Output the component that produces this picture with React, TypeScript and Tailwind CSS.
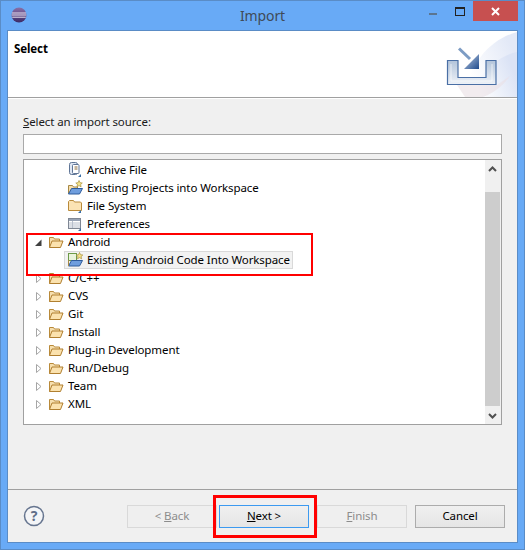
import React from 'react';

const FONT = 'font-["Noto_Sans","Open_Sans",sans-serif]';

const EclipseLogo = () => (
  <svg width="16" height="16" viewBox="0 0 16 16">
    <defs>
      <linearGradient id="ecl" x1="0" y1="0" x2="0" y2="1">
        <stop offset="0" stopColor="#8a70a8" />
        <stop offset="1" stopColor="#3b2a66" />
      </linearGradient>
    </defs>
    <circle cx="8" cy="8" r="7.5" fill="url(#ecl)" />
    <path d="M1 6h14M0.7 8h14.6M1.2 10.200h13.600" stroke="#e8e2f0" strokeWidth="1" />
  </svg>
);

const FolderOpen = () => (
  <svg width="16" height="14" viewBox="0 0 16 14">
    <path d="M1.500 12.500V2.500h4l1 1.500h5v2" fill="#f6dfae" stroke="#b98a3a" />
    <path d="M1.500 12.500L4 6h11l-2.500 6.500z" fill="#fbe2ae" stroke="#b07f30" />
  </svg>
);

const Twisty = ({ open }: { open?: boolean }) =>
  open ? (
    <svg width="9" height="9" viewBox="0 0 9 9">
      <path d="M1 8L7.500 1.500V8z" fill="#404040" />
    </svg>
  ) : (
    <svg width="9" height="11" viewBox="0 0 9 11">
      <path d="M2.500 1.500L7 5.500L2.500 9.500z" fill="#fff" stroke="#a6a6a6" />
    </svg>
  );

const WizardBadge = () => <path d="M11 15l3-3v3z" fill="#3a6ea5" />;

const ArchiveIcon = () => (
  <svg width="16" height="16" viewBox="0 0 16 16">
    <rect x="2.500" y="0.500" width="8" height="12" rx="2" fill="#dfe6f2" stroke="#5f7596" />
    <rect x="5.500" y="2.500" width="6.500" height="9" rx="1" fill="#fff" stroke="#5f7596" />
    <path d="M7.500 5h3M7.500 7h3" stroke="#8a6a3a" />
    <WizardBadge />
  </svg>
);

const ProjectsIcon = () => (
  <svg width="17" height="16" viewBox="0 0 17 16">
    <path d="M1.500 13.500V5.500h4l1 1.500h4v6.500z" fill="#f6dfae" stroke="#a78845" />
    <path d="M1.500 14L4.500 8.500h11L12.500 14z" fill="#6f9ede" stroke="#2f5c9c" />
    <path d="M12 0.500l1 2.200 2.300 0.300-1.700 1.500 0.500 2.300-2.100-1.200-2 1.200 0.500-2.300-1.700-1.500 2.300-0.300z" fill="#f4e38a" stroke="#a98f3a" strokeWidth="0.700" />
  </svg>
);

const FileSystemIcon = () => (
  <svg width="16" height="16" viewBox="0 0 16 16">
    <path d="M1.500 12.500V3.500L2.500 2.500h4l1 1.500h6l1 1v7.500z" fill="#fbe3b4" stroke="#b98a3a" />
    <WizardBadge />
  </svg>
);

const PreferencesIcon = () => (
  <svg width="16" height="16" viewBox="0 0 16 16">
    <rect x="1.500" y="2.500" width="12" height="10" fill="#fff" stroke="#7f8794" />
    <rect x="2" y="3" width="11" height="2" fill="#98a3b5" />
    <path d="M2 7h11M2 9h11M2 11h11M5.500 5v7" stroke="#b7bfcc" />
    <WizardBadge />
  </svg>
);

const AndroidCodeIcon = () => (
  <svg width="17" height="16" viewBox="0 0 17 16">
    <rect x="1.500" y="1.500" width="8" height="7" fill="#e9f3dc" stroke="#6c9a48" />
    <path d="M1.500 14L4.500 8.500h11L12.500 14z" fill="#6f9ede" stroke="#2f5c9c" />
    <path d="M1.500 14V8" stroke="#a78845" />
    <path d="M12.500 0.500l1 2.200 2.300 0.300-1.700 1.500 0.500 2.300-2.100-1.200-2 1.200 0.500-2.300-1.700-1.500 2.300-0.300z" fill="#f4e38a" stroke="#a98f3a" strokeWidth="0.700" />
  </svg>
);

const ImportBanner = () => (
  <svg width="72" height="66" viewBox="0 0 72 66">
    <defs>
      <linearGradient id="bannerBg" x1="0" y1="1" x2="1" y2="0.400">
        <stop offset="0.250" stopColor="#ffffff" />
        <stop offset="1" stopColor="#e3e9f7" />
      </linearGradient>
      <linearGradient id="bannerLow" x1="0" y1="1" x2="1" y2="0.600">
        <stop offset="0.200" stopColor="#ffffff" />
        <stop offset="1" stopColor="#dbe3f5" />
      </linearGradient>
      <linearGradient id="tray" x1="0" y1="0" x2="0" y2="1">
        <stop offset="0" stopColor="#b3c4da" />
        <stop offset="1" stopColor="#eef2f8" />
      </linearGradient>
      <linearGradient id="head" x1="0" y1="0" x2="1" y2="1">
        <stop offset="0" stopColor="#c3d3e8" />
        <stop offset="1" stopColor="#1f4a8c" />
      </linearGradient>
    </defs>
    <path d="M72 1C46 8 26 30 18 66H72z" fill="url(#bannerBg)" />
    <path d="M72 21C54 24 34 42 24 66H72z" fill="url(#bannerLow)" />
    <path d="M12 54h40l13-9C60 52 50 62 38 66H20z" fill="#eadfe4" opacity="0.600" />
    <path d="M2.500 29.500h10.500v17h28v-17h10v24h-48.500z" fill="url(#tray)" stroke="#4a6fa5" strokeWidth="1.200" />
    <path d="M6 33v17h41V33" fill="none" stroke="#ffffff" strokeWidth="1" opacity="0.600" />
    <path d="M14 17.500L25 28" stroke="#7d9cc4" strokeWidth="3" />
    <path d="M34 23v15H19z" fill="url(#head)" />
  </svg>
);

const TitleBar = () => (
  <div className="relative flex h-[29px] items-center justify-center">
    <div className="absolute left-[10px] top-[6px]">
      <EclipseLogo />
    </div>
    <span className="text-[14px] text-[#3f4a58]">Import</span>
    <div className="absolute right-[6px] top-0 flex items-start">
      <div className="mt-[12px] mr-[18px] h-[2px] w-[8px] bg-[#5b7590]" />
      <div className="mt-[6px] mr-[8px] h-[9px] w-[10px] border border-t-[2px] border-[#222]" />
      <div className="flex h-[20px] w-[45px] items-center justify-center bg-[#c75050]">
        <svg width="9" height="9" viewBox="0 0 9 9">
          <path d="M1 1l7 7M8 1L1 8" stroke="#fff" strokeWidth="2" />
        </svg>
      </div>
    </div>
  </div>
);

type Row = { label: string; icon: React.ReactNode };

const importers: Row[] = [
  { label: 'Archive File', icon: <ArchiveIcon /> },
  { label: 'Existing Projects into Workspace', icon: <ProjectsIcon /> },
  { label: 'File System', icon: <FileSystemIcon /> },
  { label: 'Preferences', icon: <PreferencesIcon /> },
];

const categories = ['C/C++', 'CVS', 'Git', 'Install', 'Plug-in Development', 'Run/Debug', 'Team', 'XML'];

const ChildRow = ({ row }: { row: Row }) => (
  <div className="flex h-[18px] items-center pl-[43px]">
    <span className="flex w-[20px] shrink-0 items-center">{row.icon}</span>
    <span>{row.label}</span>
  </div>
);

const FolderRow = ({ label, open }: { label: string; open?: boolean }) => (
  <div className="flex h-[18px] items-center pl-[10px]">
    <span className="flex w-[14px] shrink-0 items-center">
      <Twisty open={open} />
    </span>
    <span className="flex w-[20px] shrink-0 items-center">
      <FolderOpen />
    </span>
    <span>{label}</span>
  </div>
);

const Tree = () => (
  <div className="relative flex h-[266px] border border-[#a0a0a0] text-black">
    <div className="min-w-0 flex-1 bg-white pt-[1px]">
      {importers.map((row) => (
        <ChildRow key={row.label} row={row} />
      ))}
      <FolderRow label="Android" open />
      <div className="flex h-[18px] items-center pl-[40px]">
        <div className="flex h-[18px] items-center border border-[#d9d9d9] bg-[#f2f2f2] px-[2px]">
          <span className="flex w-[20px] shrink-0 items-center">
            <AndroidCodeIcon />
          </span>
          <span>Existing Android Code Into Workspace</span>
        </div>
      </div>
      {categories.map((label) => (
        <FolderRow key={label} label={label} />
      ))}
    </div>
    <div className="flex w-[17px] flex-col border-l border-white bg-[#f0f0f0] pr-[1px]">
      <div className="flex h-[17px] items-center justify-center">
        <svg width="9" height="6" viewBox="0 0 9 6">
          <path d="M1 5l3.500-3.500L8 5" fill="none" stroke="#505050" strokeWidth="2" />
        </svg>
      </div>
      <div className="mt-[15px] h-[214px] bg-[#cdcdcd]" />
      <div className="mt-auto flex h-[17px] items-center justify-center">
        <svg width="9" height="6" viewBox="0 0 9 6">
          <path d="M1 1l3.500 3.500L8 1" fill="none" stroke="#505050" strokeWidth="2" />
        </svg>
      </div>
    </div>
  </div>
);

const WizardButton = ({ children, disabled, focused }: { children: React.ReactNode; disabled?: boolean; focused?: boolean }) => (
  <button
    className={
      disabled
        ? 'flex h-[23px] w-[90px] items-center justify-center border border-[#d9d9d9] bg-[#efefef] pb-[2px] text-[#8c8c8c]'
        : focused
          ? 'flex h-[23px] w-[90px] items-center justify-center border border-[#3c9af0] bg-gradient-to-b from-[#f0f0f0] to-[#e5e5e5] pb-[2px] text-black'
          : 'flex h-[23px] w-[90px] items-center justify-center border border-[#acacac] bg-gradient-to-b from-[#f0f0f0] to-[#e5e5e5] pb-[2px] text-black'
    }
  >
    {children}
  </button>
);

const App: React.FC = () => {
  return (
    <div className={`${FONT} relative flex h-[550px] w-[525px] flex-col border border-[#5a8cc6] bg-[#68aaf6] text-[11.5px] leading-[16px] tracking-[-0.1px]`}>
      <TitleBar />
      <div className="mr-[6px] mb-[6px] ml-[6px] flex flex-1 flex-col border border-[#5a8cc6] bg-[#f0f0f0]">
        {/* Banner */}
        <div className="flex h-[67px] justify-between border-b border-[#a0a0a0] bg-white">
          <span className="pt-[10px] pl-[6px] font-bold">Select</span>
          <ImportBanner />
        </div>
        <div className="h-[1px] bg-white" />

        <div className="flex flex-1 flex-col px-[15px] pt-[15px]">
          <label className="h-[20px] text-[#1a1a1a]">
            <span className="underline">S</span>elect an import source:
          </label>
          <div className="h-[20px] border border-[#a9a9a9] bg-white" />
          <div className="mt-[5px]">
            <Tree />
          </div>
        </div>

        {/* Button bar */}
        <div className="flex h-[53px] items-start border-t border-[#a0a0a0] pt-[15px] pr-[12px] pl-[15px]">
          <svg width="22" height="22" viewBox="0 0 22 22" className="mr-[82px]">
            <circle cx="11" cy="11" r="9.500" fill="#f4f5f7" stroke="#66758f" strokeWidth="1.500" />
            <text x="11" y="16" textAnchor="middle" fontSize="14" fontWeight="700" fill="#5f6e88">?</text>
          </svg>
          <WizardButton disabled>
            <span>&lt; <span className="underline">B</span>ack</span>
          </WizardButton>
          <div className="w-[2px]" />
          <WizardButton focused>
            <span><span className="underline">N</span>ext &gt;</span>
          </WizardButton>
          <div className="w-[8px]" />
          <WizardButton disabled>
            <span><span className="underline">F</span>inish</span>
          </WizardButton>
          <div className="w-[8px]" />
          <WizardButton>Cancel</WizardButton>
        </div>
      </div>

      {/* Red annotation boxes over the screenshot */}
      <div className="absolute top-[232px] left-[25px] h-[43px] w-[287px] border-[2px] border-[#ff0000]" />
      <div className="absolute top-[494px] left-[212px] h-[43px] w-[104px] border-[3px] border-[#ff0000]" />
    </div>
  );
};

export default App;
